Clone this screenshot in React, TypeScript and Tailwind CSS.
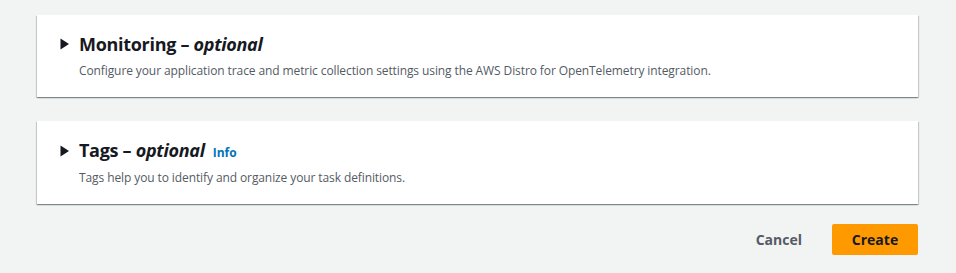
import React from "react";

function Caret() {
  return (
    <svg width="16" height="16" viewBox="0 0 16 16" className="shrink-0">
      <path d="M3.5 2.5 L12 8 L3.5 13.5 Z" fill="#16191f" />
    </svg>
  );
}

function Section({ title, info, desc }: { title: string; info?: boolean; desc: string }) {
  return (
    <div className="bg-white shadow-[0_1px_1px_0_rgba(0,28,36,0.3),1px_1px_1px_0_rgba(0,28,36,0.15),-1px_1px_1px_0_rgba(0,28,36,0.15)] pl-[20px] pr-5 pt-[18px] pb-[18px]">
      <div className="flex items-center gap-[6px]">
        <Caret />
        <div className="flex items-baseline gap-[8px]">
          <h2 className="text-[18px] leading-[22px] font-bold text-[#16191f] tracking-[-0.3px]">
            {title} – <i>optional</i>
          </h2>
          {info && <span className="text-[12px] font-bold text-[#0073bb]">Info</span>}
        </div>
      </div>
      <p className="mt-[8px] ml-[22px] text-[12px] leading-[16px] text-[#545b64] tracking-[-0.1px]">{desc}</p>
    </div>
  );
}

export default function App() {
  return (
    <div
      className="w-[956px] h-[273px] bg-[#f2f3f3] pl-[37px] pr-[38px] pt-[15px]"
      style={{ fontFamily: '"Open Sans", "Noto Sans", Arial, sans-serif' }}
    >
      <div className="flex flex-col gap-[24px]">
        <Section
          title="Monitoring"
          desc="Configure your application trace and metric collection settings using the AWS Distro for OpenTelemetry integration."
        />
        <Section
          title="Tags"
          info
          desc="Tags help you to identify and organize your task definitions."
        />
      </div>
      <div className="flex justify-end items-center mt-[20px] gap-[20px]">
        <button className="text-[14px] font-bold text-[#545b64] px-[10px] h-[31px]">Cancel</button>
        <button className="bg-[#ff9900] rounded-[2px] text-[14px] font-bold text-[#16191f] w-[86px] h-[31px]">Create</button>
      </div>
    </div>
  );
}
